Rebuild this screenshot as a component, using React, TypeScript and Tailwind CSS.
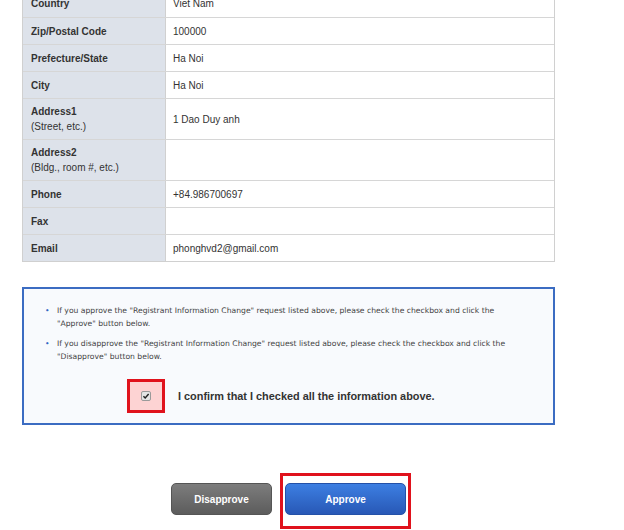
import React from 'react';

type Row = { label: string; sub?: string; value: string };

const rows: Row[] = [
  { label: 'Country', value: 'Viet Nam' },
  { label: 'Zip/Postal Code', value: '100000' },
  { label: 'Prefecture/State', value: 'Ha Noi' },
  { label: 'City', value: 'Ha Noi' },
  { label: 'Address1', sub: '(Street, etc.)', value: '1 Dao Duy anh' },
  { label: 'Address2', sub: '(Bldg., room #, etc.)', value: '' },
  { label: 'Phone', value: '+84.986700697' },
  { label: 'Fax', value: '' },
  { label: 'Email', value: 'phonghvd2@gmail.com' },
];

function InfoTable() {
  return (
    <div className="-mt-[10px] w-[533px] border-l border-r border-b border-[#d0d0d0]">
      {rows.map((r) => (
        <div
          key={r.label}
          className={`flex border-t border-[#d6d6d6] first:border-t-0 ${r.sub ? 'h-[41px]' : 'h-[27px]'}`}
        >
          <div className="flex w-[143px] shrink-0 flex-col justify-center border-r border-[#d0d0d0] bg-[#dde2ea] pl-[8px] text-[10px] leading-[15px] text-[#333]">
            <span className="font-bold">{r.label}</span>
            {r.sub && <span>{r.sub}</span>}
          </div>
          <div className="flex flex-1 items-center bg-white pl-[7px] text-[10px] text-[#333]">
            {r.value}
          </div>
        </div>
      ))}
    </div>
  );
}

function Notice() {
  return (
    <div className="mt-[25px] h-[138px] w-[533px] border-2 border-[#3b6cc2] bg-[#f8fafd] pt-[15px]">
      <ul
        className="flex flex-col gap-[7px] pl-[21px] pr-[10px] text-[7.65px] leading-[13px] text-[#444]"
        style={{ fontFamily: '"DejaVu Sans", Verdana, sans-serif' }}
      >
        <li className="flex">
          <span className="w-[12px] shrink-0 text-[#2f66c4]">•</span>
          <span>
            If you approve the "Registrant Information Change" request listed above, please check the checkbox and click the
            <br />
            "Approve" button below.
          </span>
        </li>
        <li className="flex">
          <span className="w-[12px] shrink-0 text-[#2f66c4]">•</span>
          <span>
            If you disapprove the "Registrant Information Change" request listed above, please check the checkbox and click the
            <br />
            "Disapprove" button below.
          </span>
        </li>
      </ul>
      <div className="mt-[16px] flex items-center pl-[103px]">
        <div className="flex h-[34px] w-[38px] items-center justify-center border-[3px] border-[#e0121c] bg-[#fdd3d3]">
          <span className="flex h-[10px] w-[10px] items-center justify-center rounded-[2px] border border-[#9a9a9a] bg-[#e4e4e4]">
            <svg viewBox="0 0 10 10" className="h-[8px] w-[8px]">
              <path d="M1.8 5.2 L4 7.4 L8.3 2.6" fill="none" stroke="#222" strokeWidth="1.8" />
            </svg>
          </span>
        </div>
        <span className="ml-[13px] text-[10.9px] font-bold text-[#333]">
          I confirm that I checked all the information above.
        </span>
      </div>
    </div>
  );
}

export default function App() {
  return (
    <div className="h-[530px] w-[624px] overflow-hidden bg-white" style={{ fontFamily: '"Liberation Sans", Arial, sans-serif' }}>
      <div className="pl-[22px]">
        <InfoTable />
        <Notice />
        <div className="mt-[48px] flex items-start pl-[149px]">
          <button className="mt-[10px] h-[32px] w-[101px] rounded-[5px] border border-[#555] bg-gradient-to-b from-[#7d7d7d] to-[#5c5c5c] text-[10px] font-bold text-white">
            Disapprove
          </button>
          <div className="ml-[8px] border-[3px] border-[#e0121c] px-[2px] pt-[7px] pb-[11px]">
            <button className="h-[32px] w-[121px] rounded-[5px] border border-[#2451a8] bg-gradient-to-b from-[#3d7fe2] to-[#2858b6] text-[10px] font-bold text-white">
              Approve
            </button>
          </div>
        </div>
      </div>
    </div>
  );
}
